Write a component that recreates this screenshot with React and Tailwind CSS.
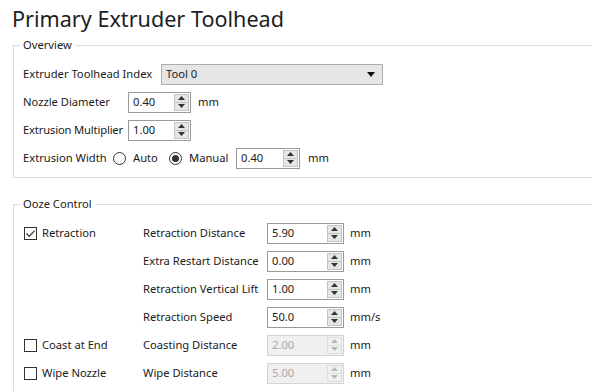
import React from "react";

const FONT = { fontFamily: '"Noto Sans", "Open Sans", sans-serif' };

function Arrows({ disabled }) {
  const c = disabled ? "#b8b8b8" : "#333333";
  return (
    <div className={`flex flex-col w-[15px] h-[17px] mr-[1px] border ${disabled ? "border-[#dedede] bg-[#f0f0f0]" : "border-[#c4c4c4] bg-[#e6e6e6]"}`}>
      <div className="flex-1 flex items-center justify-center">
        <svg width="7" height="4" viewBox="0 0 7 4"><path d="M3.5 0 L7 4 L0 4 Z" fill={c} /></svg>
      </div>
      <div className={`h-px ${disabled ? "bg-[#dedede]" : "bg-[#c4c4c4]"}`} />
      <div className="flex-1 flex items-center justify-center">
        <svg width="7" height="4" viewBox="0 0 7 4"><path d="M0 0 L7 0 L3.5 4 Z" fill={c} /></svg>
      </div>
    </div>
  );
}

function Spin({ value, w, disabled }) {
  return (
    <div
      className={`flex items-center h-[21px] border ${disabled ? "border-[#d4d4d4] bg-[#f0f0f0] text-[#a8a8a8]" : "border-[#9a9a9a] bg-white text-[#1a1a1a]"}`}
      style={{ width: w }}
    >
      <span className="flex-1 pl-[4px] leading-none">{value}</span>
      <Arrows disabled={disabled} />
    </div>
  );
}

function Check({ checked }) {
  return (
    <div className="w-[13px] h-[13px] border border-[#333333] bg-white flex items-center justify-center">
      {checked && (
        <svg width="11" height="11" viewBox="0 0 11 11">
          <path d="M1.5 5.5 L4.2 8.3 L9.6 2.6" fill="none" stroke="#333" strokeWidth="1.2" />
        </svg>
      )}
    </div>
  );
}

function Radio({ checked }) {
  return (
    <div className="w-[13px] h-[13px] rounded-full border border-[#333333] bg-white flex items-center justify-center">
      {checked && <div className="w-[7px] h-[7px] rounded-full bg-[#333333]" />}
    </div>
  );
}

function Group({ title, children, className = "" }) {
  return (
    <div className={`relative ml-[13px] w-[600px] border border-[#dcdcdc] ${className}`}>
      <div className="absolute -top-[9px] left-[6px] px-[3px] bg-white leading-[16px] text-[#1a1a1a]">
        {title}
      </div>
      {children}
    </div>
  );
}

export default function App() {
  return (
    <div className="w-[592px] h-[391px] bg-white overflow-hidden text-[11.2px] text-[#1a1a1a] whitespace-nowrap" style={FONT}>
      <div className="h-[45px] pl-[12px] pt-[3px] text-[21.6px] leading-[32px] text-[#1e1e1e]">
        Primary Extruder Toolhead
      </div>
      <Group title="Overview" className="pt-[14px] pb-[5px] pl-[9px]">
        <div className="flex items-center h-[28px]">
          <div className="w-[138px]">Extruder Toolhead Index</div>
          <div className="flex items-center w-[222px] h-[21px] border border-[#adadad] bg-[#e5e5e5] pl-[4px] pr-[7px]">
            <span className="flex-1">Tool 0</span>
            <svg width="8" height="5" viewBox="0 0 8 5"><path d="M0 0 L8 0 L4 5 Z" fill="#111" /></svg>
          </div>
        </div>
        <div className="flex items-center h-[28px]">
          <div className="w-[105px]">Nozzle Diameter</div>
          <Spin value="0.40" w={63} />
          <span className="ml-[7px]">mm</span>
        </div>
        <div className="flex items-center h-[28px]">
          <div className="w-[105px] tracking-[-0.15px]">Extrusion Multiplier</div>
          <Spin value="1.00" w={63} />
        </div>
        <div className="flex items-center h-[28px]">
          <div className="w-[90px]">Extrusion Width</div>
          <Radio />
          <span className="ml-[7px] w-[36px]">Auto</span>
          <Radio checked />
          <span className="ml-[7px] w-[47px]">Manual</span>
          <Spin value="0.40" w={64} />
          <span className="ml-[8px]">mm</span>
        </div>
      </Group>
      <Group title="Ooze Control" className="mt-[26px] pt-[14px] pl-[10px] h-[200px]">
        <div className="flex">
          <div className="w-[119px] flex flex-col">
            <div className="flex items-center h-[28px]">
              <Check checked />
              <span className="ml-[5px]">Retraction</span>
            </div>
            <div className="h-[84px]" />
            <div className="flex items-center h-[28px]">
              <Check />
              <span className="ml-[5px]">Coast at End</span>
            </div>
            <div className="flex items-center h-[28px]">
              <Check />
              <span className="ml-[5px]">Wipe Nozzle</span>
            </div>
          </div>
          <div className="flex flex-col">
            {[
              ["Retraction Distance", "5.90", "mm", false],
              ["Extra Restart Distance", "0.00", "mm", false],
              ["Retraction Vertical Lift", "1.00", "mm", false],
              ["Retraction Speed", "50.0", "mm/s", false],
              ["Coasting Distance", "2.00", "mm", true],
              ["Wipe Distance", "5.00", "mm", true],
            ].map(([l, v, u, d]) => (
              <div key={l} className="flex items-center h-[28px]">
                <div className="w-[124px]">{l}</div>
                <Spin value={v} w={77} disabled={d} />
                <span className="ml-[6px]">{u}</span>
              </div>
            ))}
          </div>
        </div>
      </Group>
    </div>
  );
}
